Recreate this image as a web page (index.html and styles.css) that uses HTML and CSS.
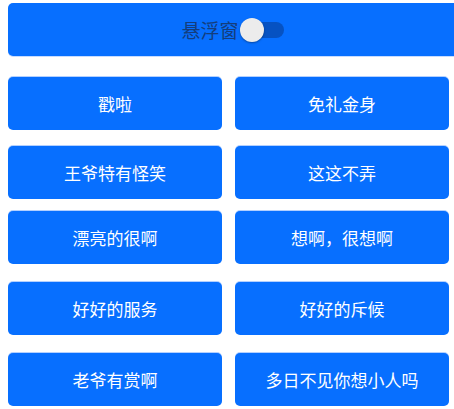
FILE: index.html
```html
<!DOCTYPE html>
<html lang="zh">
<head>
<meta charset="utf-8">
<link rel="stylesheet" href="styles.css">
</head>
<body>
<div class="page">
  <div class="topbar">
    <span class="toplabel">悬浮窗</span>
    <span class="switch"><span class="track"></span><span class="thumb"></span></span>
  </div>
  <div class="row r1"><div class="btn">戳啦</div><div class="btn">免礼金身</div></div>
  <div class="row r2"><div class="btn">王爷特有怪笑</div><div class="btn">这这不弄</div></div>
  <div class="row r3"><div class="btn">漂亮的很啊</div><div class="btn">想啊，很想啊</div></div>
  <div class="row r4"><div class="btn">好好的服务</div><div class="btn">好好的斥候</div></div>
  <div class="row r5"><div class="btn">老爷有赏啊</div><div class="btn">多日不见你想小人吗</div></div>
</div>
</body>
</html>
```
FILE: styles.css
```css
html, body {
  margin: 0;
  padding: 0;
  background: #ffffff;
  overflow: hidden;
}
.page {
  width: 454px;
  height: 409px;
  padding: 3px 0 0 8px;
  box-sizing: border-box;
  font-family: "Noto Sans CJK SC", "Noto Sans", sans-serif;
}
.topbar {
  width: 460px;
  height: 53px;
  background: #076fff;
  border-radius: 5px;
  display: flex;
  align-items: center;
  justify-content: center;
  padding-right: 10px;
  box-sizing: border-box;
  box-shadow: 0 1px 0 #c6dcff;
}
.toplabel {
  font-size: 19px;
  color: #143d7c;
  line-height: 1;
}
.switch {
  position: relative;
  width: 46px;
  height: 26px;
  display: inline-block;
}
.track {
  position: absolute;
  left: 8px;
  top: 5px;
  width: 37px;
  height: 16px;
  border-radius: 8px;
  background: #0652c2;
}
.thumb {
  position: absolute;
  left: 1px;
  top: 1px;
  width: 24px;
  height: 24px;
  border-radius: 50%;
  background: #ececec;
  box-shadow: 0 1px 2px rgba(0, 0, 0, 0.35);
}
.row {
  display: flex;
  gap: 13px;
}
.r1 { margin-top: 21px; }
.r2 { margin-top: 16px; }
.r3 { margin-top: 12px; }
.r4 { margin-top: 18px; }
.r5 { margin-top: 18px; }
.btn {
  width: 214px;
  height: 53px;
  background: #076fff;
  border-radius: 5px;
  color: #ffffff;
  font-size: 17px;
  display: flex;
  align-items: center;
  justify-content: center;
  box-shadow: 0 -1px 0 #b3d0ff;
}
```
